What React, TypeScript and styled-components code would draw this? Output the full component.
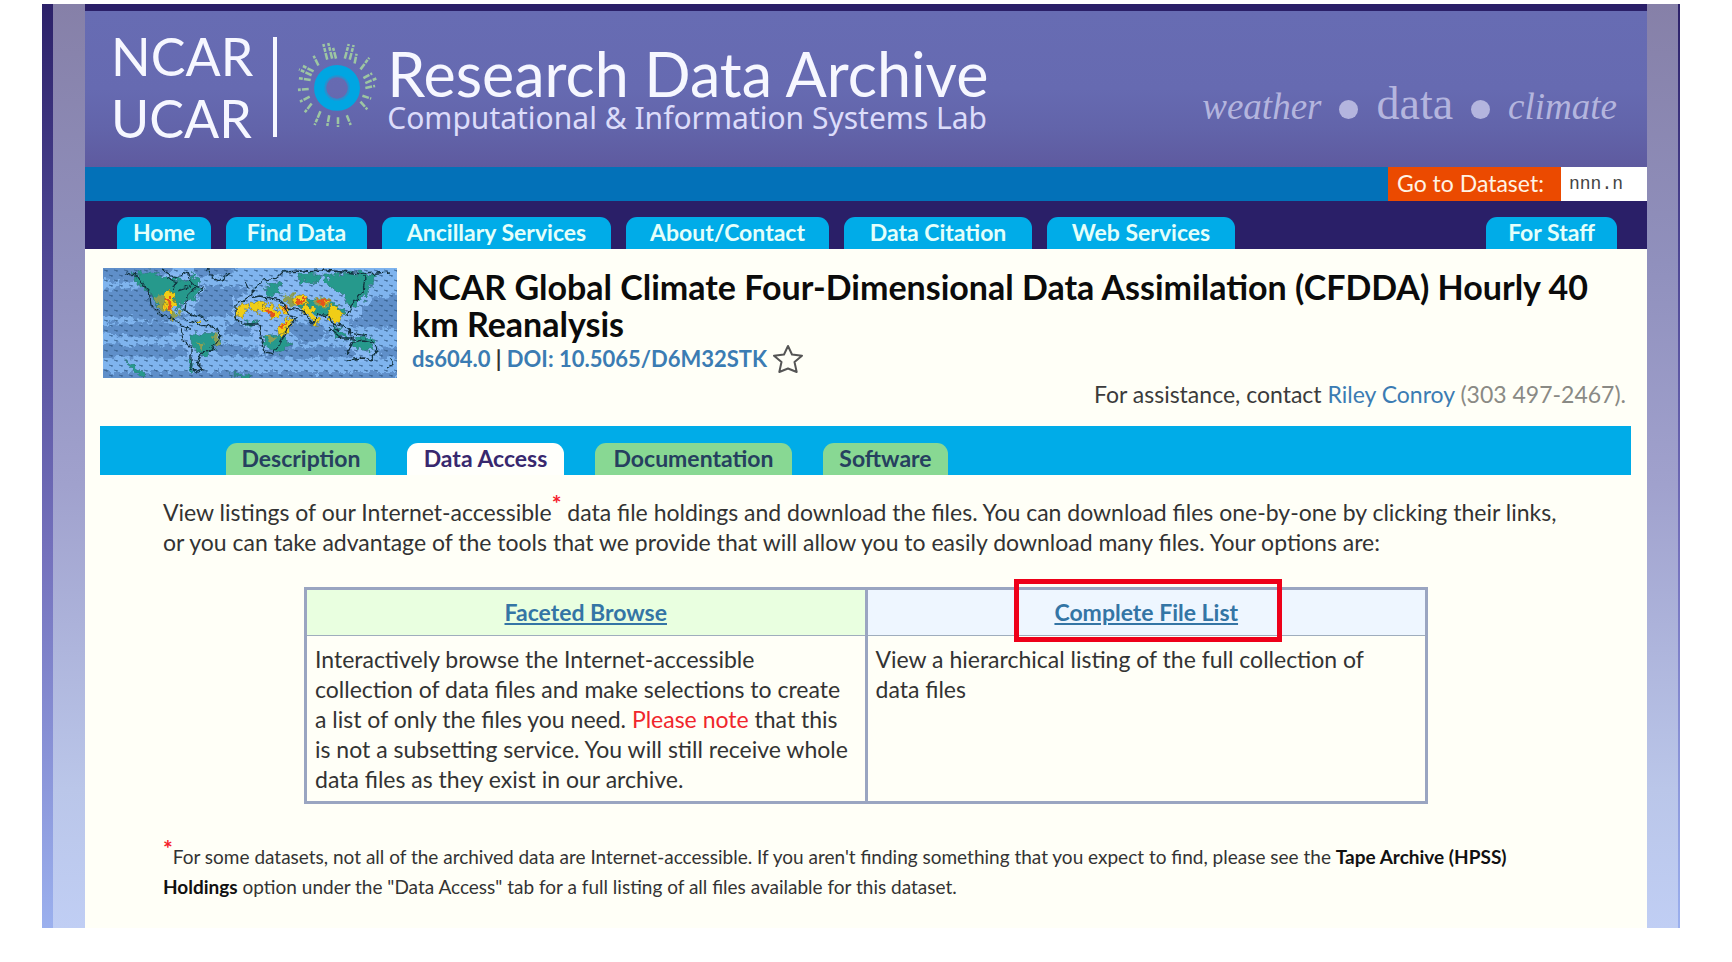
import React from "react";
import styled, { createGlobalStyle } from "styled-components";

const GlobalStyle = createGlobalStyle`
  * { box-sizing: border-box; }
  body {
    margin: 0;
    background: #ffffff;
    color: #333333;
    font-family: Lato, Carlito, sans-serif;
    font-size: 23px;
    line-height: 30px;
  }
`;

const Frame = styled.div`
  margin: 4px 52px 0 42px;
  padding: 0 2px 0 11px;
  background: linear-gradient(180deg, #2c2169 0%, #4c4592 26%, #7572bd 60%, #9bb0ee 100%);
`;

const Rails = styled.div`
  padding: 0 31px 0 32px;
  background: linear-gradient(180deg, #8680a8 0%, #9090bd 28%, #a0a1cd 52%, #bac6e9 85%, #c0cef4 100%);
`;

const Page = styled.div`
  background: #fffff7;
`;

const Masthead = styled.header`
  display: flex;
  align-items: center;
  height: 163px;
  padding: 0 30px 0 26px;
  border-top: 7px solid #2a1f68;
  background: linear-gradient(180deg, #676cb3 0%, #666ab1 50%, #6264aa 75%, #5e5a9f 100%);
  color: #f6f7ff;
`;

const Institution = styled.div`
  display: flex;
  flex-direction: column;
  justify-content: center;
  height: 100px;
  margin-bottom: 4px;
  padding-right: 20px;
  border-right: 4px solid #f6f7ff;
  font-size: 52px;
  line-height: 62px;
`;

const Burst = styled.svg`
  flex: none;
  width: 82px;
  height: 88px;
  margin: 0 8px 8px 20px;
`;

const SiteTitle = styled.div`
  display: flex;
  flex-direction: column;
  margin-bottom: 2px;
  white-space: nowrap;
`;

const SiteName = styled.div`
  font-size: 61px;
  line-height: 60px;
`;

const SiteOwner = styled.div`
  font-family: "Noto Sans", sans-serif;
  font-size: 30px;
  line-height: 28px;
  color: #dcdcfa;
`;

const Tagline = styled.div`
  display: flex;
  align-items: baseline;
  gap: 18px;
  margin-left: auto;
  padding-top: 32px;
  color: #b4b5de;
  font-family: "Liberation Serif", serif;
  font-size: 46px;
  line-height: 48px;

  em { font-size: 37px; }
`;

const Bullet = styled.span`
  width: 19px;
  height: 19px;
  border-radius: 50%;
  background: #b4b5de;
`;

const SearchBar = styled.form`
  display: flex;
  justify-content: flex-end;
  height: 34px;
  background: #0371b8;
`;

const SearchLabel = styled.label`
  width: 173px;
  padding-left: 9px;
  background: #eb4a00;
  color: #fff3e4;
  line-height: 32px;
`;

const SearchInput = styled.input`
  width: 86px;
  padding: 0 8px;
  border: 0;
  background: #ffffff;
  font-family: "Liberation Mono", monospace;
  font-size: 18px;

  &::placeholder { color: #444444; opacity: 1; }
`;

const MainNav = styled.nav`
  display: flex;
  align-items: flex-end;
  gap: 15px;
  height: 48px;
  padding: 0 30px 0 32px;
  background: #2a1f68;
`;

const NavTab = styled.a<{ $width: number; $end?: boolean }>`
  width: ${(p) => p.$width}px;
  height: 32px;
  margin-left: ${(p) => (p.$end ? "auto" : "0")};
  border-radius: 11px 11px 0 0;
  background: #00ace8;
  color: #e4fffa;
  font-weight: 700;
  line-height: 30px;
  text-align: center;
  text-decoration: none;
  white-space: nowrap;
`;

const Dataset = styled.section`
  display: flex;
  gap: 15px;
  padding: 19px 21px 0 18px;
`;

const MapImage = styled.svg`
  flex: none;
  width: 294px;
  height: 110px;
`;

const DatasetInfo = styled.div`
  flex: 1;
`;

const DatasetTitle = styled.h1`
  margin: 0;
  color: #0b0b0b;
  font-size: 34px;
  line-height: 37px;
`;

const DatasetIds = styled.div`
  display: flex;
  align-items: center;
  gap: 6px;
  margin-top: 2px;
  font-size: 22px;
  font-weight: 700;
`;

const Link = styled.a`
  color: #3b7cb3;
  text-decoration: none;
`;

const StarButton = styled.button`
  display: flex;
  padding: 0;
  border: 0;
  background: none;
`;

const Assistance = styled.p`
  margin: 5px 0 0;
  text-align: right;
  color: #8a8a85;

  span { color: #3b3b3b; }
`;

const SubNav = styled.nav`
  display: flex;
  align-items: flex-end;
  gap: 31px;
  height: 49px;
  margin: 17px 16px 0 15px;
  padding-left: 126px;
  background: #00ace8;
`;

const SubTab = styled.a<{ $width: number; $active?: boolean }>`
  width: ${(p) => p.$width}px;
  height: 32px;
  border-radius: 11px 11px 0 0;
  background: ${(p) => (p.$active ? "#fffffb" : "#88d893")};
  color: ${(p) => (p.$active ? "#38286e" : "#26405f")};
  font-weight: 700;
  line-height: 30px;
  text-align: center;
  text-decoration: none;
  white-space: nowrap;
`;

const Content = styled.main`
  padding: 22px 84px 26px 78px;
`;

const Intro = styled.p`
  margin: 0;
`;

const Star = styled.sup`
  color: #f5202c;
  font-size: 23px;
  font-weight: 700;
  line-height: 0;
`;

const Options = styled.table`
  width: 1124px;
  max-width: 100%;
  margin: 30px 0 0 141px;
  border-collapse: collapse;
  border: 3px solid #9aa5c1;
  table-layout: fixed;
`;

const OptionHead = styled.th<{ $tone: string }>`
  position: relative;
  height: 47px;
  padding: 0 0 2px;
  border-right: 3px solid #9aa5c1;
  border-bottom: 1px solid #9fadbd;
  background: ${(p) => p.$tone};

  a { color: #3475a5; }
`;

const OptionCell = styled.td`
  height: 167px;
  padding: 8px 15px 6px 8px;
  border-right: 3px solid #9aa5c1;
  vertical-align: top;
`;

const Highlight = styled.span`
  position: absolute;
  top: -11px;
  bottom: -7px;
  left: calc(50% - 132px);
  width: 268px;
  border: 5px solid #ee0019;
  pointer-events: none;
`;

const Note = styled.span`
  color: #f0262c;
`;

const Footnote = styled.p`
  margin: 38px 0 0;
  font-size: 19px;

  b { color: #111111; }
`;

const rays = [
  [22, 24, 17, 14], [31, 18, 27, 2], [36, 17, 32, 1], [40, 17, 37, 6],
  [49, 17, 53, 2], [54, 18, 58, 3], [59, 22, 61, 12], [65, 28, 74, 16],
  [68, 37, 77, 32], [70, 42, 82, 37], [70, 47, 80, 45], [67, 55, 76, 58],
  [65, 61, 72, 69], [51, 75, 55, 85], [42, 77, 42, 87], [33, 75, 31, 86],
  [24, 71, 18, 85], [15, 63, 8, 72], [13, 56, 3, 61], [12, 48, 1, 49],
  [14, 39, 2, 37], [15, 34, 2, 28], [17, 30, 5, 24],
];

function BurstLogo() {
  return (
    <Burst viewBox="0 0 84 88" aria-hidden="true">
      <g stroke="#9dc6a2" strokeWidth="2.6" strokeDasharray="7 1.200 4 1.200">
        {rays.map(([x1, y1, x2, y2], i) => (
          <line key={i} x1={x1} y1={y1} x2={x2} y2={y2} />
        ))}
      </g>
      <circle cx="41" cy="47" r="17.5" fill="none" stroke="#00a6e2" strokeWidth="12" />
      <circle cx="41" cy="47" r="12" fill="none" stroke="#2a8fce" strokeWidth="2" />
    </Burst>
  );
}

function WorldMap() {
  return (
    <MapImage viewBox="0 0 294 110" preserveAspectRatio="none" role="img" aria-label="World climate map">
      <defs>
        <pattern id="wind" width="10" height="10" patternUnits="userSpaceOnUse">
          <path d="M1 2l3.500 1M6 7l3.500 1" stroke="#2f5680" strokeWidth="1" fill="none" />
          <path d="M3 2h1.600v1.600H3zM8 7h1.600v1.600H8z" fill="#2f5680" />
        </pattern>
        <filter id="rough" x="-5%" y="-5%" width="110%" height="110%">
          <feTurbulence type="fractalNoise" baseFrequency=".16" numOctaves="3" seed="4" />
          <feDisplacementMap in="SourceGraphic" scale="12" xChannelSelector="R" yChannelSelector="G" />
        </filter>
        <filter id="coast" x="-5%" y="-5%" width="110%" height="110%">
          <feTurbulence type="fractalNoise" baseFrequency=".2" numOctaves="2" seed="9" />
          <feDisplacementMap in="SourceGraphic" scale="6" xChannelSelector="R" yChannelSelector="G" />
        </filter>
      </defs>
      <rect width="294" height="110" fill="#7fb4ee" />
      <g fill="#5f8fc9" filter="url(#rough)">
        <path d="M-5-5h80L60 8 20 14-5 10zM-5 22l45-4 18 10 30 20-30 6-63-8zM96 16l50 4-8 26-42 4-8-18zM-5 56l70-2 20 8-30 8-60-4zM-5 76l86 2 8 12-94-1zM110 74l50 8 60-4 80 2v9l-90 2-96-4zM250 34l50-8v36l-52-4zM180 56l36-2 12 14-30 8zM-5 104h300v10H-5zM120 55l34 2-8 12-26-4zM88-5h50l-12 12-30 3z" />
      </g>
      <g fill="#86b8f2" filter="url(#rough)">
        <path d="M45 8l45-4 12 16-14 22-12 6-24-14zM76 60l36 4-8 22-16 14-8-26zM130 30l40-10 12 30-8 30-18 8-8-28-18-10zM160 8l100-4 10 24-14 22-40 4-48-8zM244 76l24-6 10 18-22 8z" />
      </g>
      <rect width="294" height="110" fill="url(#wind)" opacity=".75" />
      <g fill="#26998c" stroke="#2b6f72" strokeWidth=".6" filter="url(#rough)">
        <path d="M28 6l20-2 26 8 12 2 4-10 8 14-4 12-14 4-2 12-8-12-14-2-10-8-12-8zM48 26l10 4 6 12-8-3zM88 66l26-1 4 8-10 12-10 4-8-10zM86 92l6 3-2 8-4-2zM158 66l24 2 6 10-14 8-12-8zM195 5l20 1-2 10-16-3zM220 6l44-1 8 4-10 20-14 12-10-16-12-8zM162 18l12-2 6 8-14 4zM228 58l14 6 4 8-14-6zM248 72l20-4 4 10-10 6-10-6zM22 92l10 6 12 10-4 1-12-9zM126 106l22 1-4 4zM140 54h14l-4 4zM196 30l30 4 16 6-6 12-20-6-18-4z" />
      </g>
      <g fill="#8b9f54" filter="url(#rough)">
        <path d="M110 64l8 2-2 10-7-3zM92 74l8 2-2 6zM164 66l10 4-6 5zM66 40l12 6-8 6zM52 27l9 2 4 14-8-2zM178 28l14-2 4 8-10 4zM212 28l16 4-4 8-10-2z" />
      </g>
      <g fill="#f0cd12" stroke="#6d6a2a" strokeWidth=".5" filter="url(#rough)">
        <path d="M60 25l9-2 4 13-5 15-7-13zM132 40l11-5 3 5-6 7-8 2zM146 35l13 1 1 7-13-1zM160 36l11 1 5 12-7 3-2-7-8 0zM175 63l10-13 4 2-5 13-8 3zM177 35l9 7-2 5-8-6zM190 29l13-1 2 8-13 2zM201 37l9 4 6 11-4 6-5-9-8-5zM227 39l8-2 4 9-1 7-6 2-7-7zM215 31l11 3-7 5zM94 52l5 2-2 2z" />
      </g>
      <g fill="#e4531d" filter="url(#rough)">
        <path d="M63 30l5 0 1 13-5-2zM191 31l13 0-6 6zM215 31l10 2-7 4zM164 40l6 3 0 5-7-2zM179 60l5-5-2 7zM180 38l5 4-5 1z" />
      </g>
      <g fill="none" stroke="#12323f" strokeWidth="1.300" filter="url(#coast)">
        <path d="M22 5l12 2 6 10 6 6 2 14 10 10 14 4 6 6 10 4M92 20l-8 8-2 14 6 5M88 46l10 2 6 4M60 2l12 8 12-6 6 14 10 2-4 6M104 0l6 10 8 2 10-8M78 60l2 12 8 8 0 20 6 4 6-2-6-6 4-10 12-6 8-12-4-8-20-4-14-6M150 20l10-8 14-2 6-6 40-2 40 4 28-2M152 22l-8 8-12 8 0 12 8 6 16 0 2 14 4 14 8 2 8-12 4-10 12-14-8-2-8-16-22-4-8 2M184 40l14 2 6 6 6 8 4-10 12 2 6 12 4 4M262 8l-2 16-12 14-4 10M226 60l12 10 14 0M230 56l10 2 12 8 12 2M244 86l6-12 10-2 10 2 4 10-6 8-8-2-16 2M286 90l4 6-6 4M244 60l4 10M142 14l4 8M64 10l10 4-4 8M76 22l12-4" />
      </g>
    </MapImage>
  );
}

export default function App() {
  return (
    <>
      <GlobalStyle />
      <Frame>
        <Rails>
          <Page>
            <Masthead>
              <Institution>
                <span>NCAR</span>
                <span>UCAR</span>
              </Institution>
              <BurstLogo />
              <SiteTitle>
                <SiteName>Research Data Archive</SiteName>
                <SiteOwner>Computational &amp; Information Systems Lab</SiteOwner>
              </SiteTitle>
              <Tagline>
                <em>weather</em>
                <Bullet />
                <span>data</span>
                <Bullet />
                <em>climate</em>
              </Tagline>
            </Masthead>
            <SearchBar>
              <SearchLabel htmlFor="dataset">Go to Dataset:</SearchLabel>
              <SearchInput id="dataset" placeholder="nnn.n" />
            </SearchBar>
            <MainNav>
              <NavTab href="#home" $width={94}>Home</NavTab>
              <NavTab href="#find" $width={141}>Find Data</NavTab>
              <NavTab href="#services" $width={229}>Ancillary Services</NavTab>
              <NavTab href="#about" $width={203}>About/Contact</NavTab>
              <NavTab href="#citation" $width={188}>Data Citation</NavTab>
              <NavTab href="#web" $width={188}>Web Services</NavTab>
              <NavTab href="#staff" $width={131} $end>For Staff</NavTab>
            </MainNav>
            <Dataset>
              <WorldMap />
              <DatasetInfo>
                <DatasetTitle>
                  NCAR Global Climate Four-Dimensional Data Assimilation (CFDDA) Hourly 40 km Reanalysis
                </DatasetTitle>
                <DatasetIds>
                  <span>
                    <Link href="#ds604.0">ds604.0</Link> | <Link href="#doi">DOI: 10.5065/D6M32STK</Link>
                  </span>
                  <StarButton type="button" aria-label="Add to favourites">
                    <svg width="30" height="30" viewBox="0 0 30 30" fill="none" stroke="#555555" strokeWidth="2" strokeLinejoin="round">
                      <path d="M15 2l4 8.500 10 1.200-7.500 6.300 2.200 10L15 24.500 6.300 28l2.200-10L1 11.700l10-1.200z" />
                    </svg>
                  </StarButton>
                </DatasetIds>
                <Assistance>
                  <span>For assistance, contact</span> <Link href="#contact">Riley Conroy</Link> (303 497-2467).
                </Assistance>
              </DatasetInfo>
            </Dataset>
            <SubNav>
              <SubTab href="#description" $width={150}>Description</SubTab>
              <SubTab href="#access" $width={157} $active>Data Access</SubTab>
              <SubTab href="#documentation" $width={197}>Documentation</SubTab>
              <SubTab href="#software" $width={125}>Software</SubTab>
            </SubNav>
            <Content>
              <Intro>
                View listings of our Internet-accessible<Star>*</Star> data file holdings and download the files. You can
                download files one-by-one by clicking their links, or you can take advantage of the tools that we provide
                that will allow you to easily download many files. Your options are:
              </Intro>
              <Options>
                <thead>
                  <tr>
                    <OptionHead $tone="#e9ffe0"><a href="#faceted">Faceted Browse</a></OptionHead>
                    <OptionHead $tone="#eef6ff">
                      <a href="#files">Complete File List</a>
                      <Highlight />
                    </OptionHead>
                  </tr>
                </thead>
                <tbody>
                  <tr>
                    <OptionCell>
                      Interactively browse the Internet-accessible collection of data files and make selections to create a
                      list of only the files you need. <Note>Please note</Note> that this is not a subsetting service. You
                      will still receive whole data files as they exist in our archive.
                    </OptionCell>
                    <OptionCell>View a hierarchical listing of the full collection of data files</OptionCell>
                  </tr>
                </tbody>
              </Options>
              <Footnote>
                <Star>*</Star>For some datasets, not all of the archived data are Internet-accessible. If you aren't
                finding something that you expect to find, please see the <b>Tape Archive (HPSS) Holdings</b> option under
                the "Data Access" tab for a full listing of all files available for this dataset.
              </Footnote>
            </Content>
          </Page>
        </Rails>
      </Frame>
    </>
  );
}
